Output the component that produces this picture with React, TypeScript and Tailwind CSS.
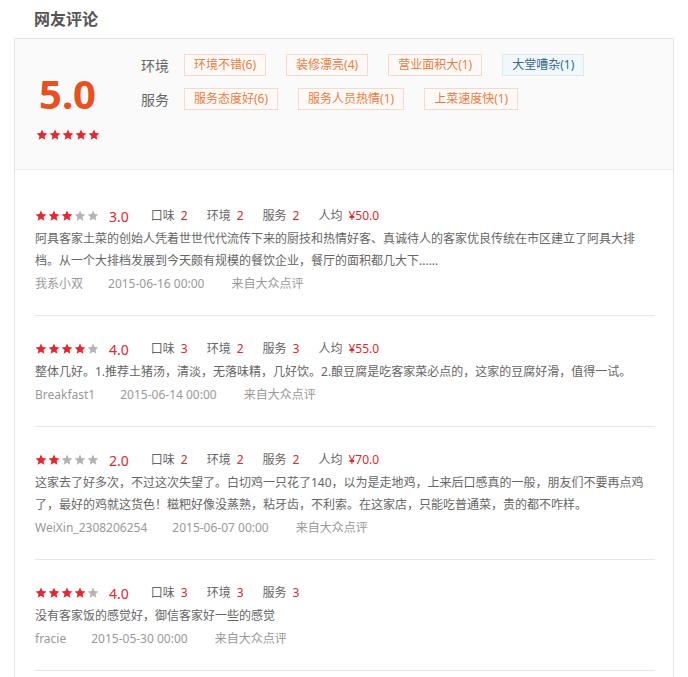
import React from 'react'

type Review = {
  stars: number
  score: string
  taste: number
  env: number
  service: number
  price?: string
  text: string
  user: string
  date: string
}

const reviews: Review[] = [
  {
    stars: 3,
    score: '3.0',
    taste: 2,
    env: 2,
    service: 2,
    price: '¥50.0',
    text: '阿具客家土菜的创始人凭着世世代代流传下来的厨技和热情好客、真诚待人的客家优良传统在市区建立了阿具大排档。从一个大排档发展到今天颇有规模的餐饮企业，餐厅的面积都几大下......',
    user: '我系小双',
    date: '2015-06-16 00:00',
  },
  {
    stars: 4,
    score: '4.0',
    taste: 3,
    env: 2,
    service: 3,
    price: '¥55.0',
    text: '整体几好。1.推荐土猪汤，清淡，无落味精，几好饮。2.酿豆腐是吃客家菜必点的，这家的豆腐好滑，值得一试。',
    user: 'Breakfast1',
    date: '2015-06-14 00:00',
  },
  {
    stars: 2,
    score: '2.0',
    taste: 2,
    env: 2,
    service: 2,
    price: '¥70.0',
    text: '这家去了好多次，不过这次失望了。白切鸡一只花了140，以为是走地鸡，上来后口感真的一般，朋友们不要再点鸡了，最好的鸡就这货色！糍粑好像没蒸熟，粘牙齿，不利索。在这家店，只能吃普通菜，贵的都不咋样。',
    user: 'WeiXin_2308206254',
    date: '2015-06-07 00:00',
  },
  {
    stars: 4,
    score: '4.0',
    taste: 3,
    env: 3,
    service: 3,
    text: '没有客家饭的感觉好，御信客家好一些的感觉',
    user: 'fracie',
    date: '2015-05-30 00:00',
  },
]

// 标签
const envTags = [
  { label: '环境不错(6)', good: true },
  { label: '装修漂亮(4)', good: true },
  { label: '营业面积大(1)', good: true },
  { label: '大堂嘈杂(1)', good: false },
]
const serviceTags = [
  { label: '服务态度好(6)', good: true },
  { label: '服务人员热情(1)', good: true },
  { label: '上菜速度快(1)', good: true },
]

function Star({ on }: { on: boolean }) {
  return (
    <svg width="12" height="12" viewBox="0 0 24 24" className="block">
      <polygon
        points="12,1.2 15.2,8.1 22.8,8.9 17.1,14 18.7,21.6 12,17.7 5.3,21.6 6.9,14 1.2,8.9 8.8,8.1"
        fill={on ? '#e8262d' : '#b5b5b5'}
      />
    </svg>
  )
}

function Stars({ count }: { count: number }) {
  return (
    <div className="flex gap-[1px]">
      {[0, 1, 2, 3, 4].map(i => (
        <Star key={i} on={i < count} />
      ))}
    </div>
  )
}

function Tag({ label, good }: { label: string; good: boolean }) {
  return (
    <span
      className={`h-[22px] px-[9px] flex items-center border text-[12px] ${
        good
          ? 'border-[#f7d9c9] bg-[#fffaf7] text-[#ef7a3e]'
          : 'border-[#d8eaf2] bg-[#f1f8fb] text-[#35688a]'
      }`}
    >
      {label}
    </span>
  )
}

function Item({ label, value }: { label: string; value: string | number }) {
  return (
    <span className="mr-[19px] flex items-center">
      <span className="text-[#666]">{label}</span>
      <span className="ml-[6px] text-[#e4262d]">{value}</span>
    </span>
  )
}

export default function App() {
  return (
    <div
      className="h-[677px] overflow-hidden bg-white px-[14px]"
      style={{ fontFamily: '"Noto Sans", "Noto Sans CJK SC", sans-serif' }}
    >
      <h2 className="h-[38px] flex items-center pl-[20px] text-[16px] font-bold text-[#555]">网友评论</h2>

      <div className="border border-[#e6e6e6]">
        <div className="h-[131px] bg-[#fafafa] border-b border-[#ebebeb] flex">
          <div className="w-[105px] flex flex-col items-center pt-[35px]">
            <div className="text-[40px] leading-[40px] font-bold text-[#ea4f1f]">5.0</div>
            <div className="mt-[15px]">
              <Stars count={5} />
            </div>
          </div>
          <div className="ml-[21px] pt-[15px] flex flex-col gap-[12px]">
            <div className="flex items-center">
              <span className="w-[28px] mr-[15px] text-[14px] text-[#666]">环境</span>
              <div className="flex gap-[20px]">
                {envTags.map(t => (
                  <Tag key={t.label} {...t} />
                ))}
              </div>
            </div>
            <div className="flex items-center">
              <span className="w-[28px] mr-[15px] text-[14px] text-[#666]">服务</span>
              <div className="flex gap-[20px]">
                {serviceTags.map(t => (
                  <Tag key={t.label} {...t} />
                ))}
              </div>
            </div>
          </div>
        </div>

        <div className="pt-[13px] pl-[20px] pr-[18px]">
          {reviews.map((r, index) => (
            <div key={index} className="pt-[23px] pb-[20px] border-b border-[#e8e8e8]">
              <div className="h-[20px] flex items-center text-[12px]">
                <Stars count={r.stars} />
                <span className="ml-[10px] mr-[22px] text-[14px] text-[#e4262d]">{r.score}</span>
                <Item label="口味" value={r.taste} />
                <Item label="环境" value={r.env} />
                <Item label="服务" value={r.service} />
                {r.price && <Item label="人均" value={r.price} />}
              </div>
              <p className="mt-[2px] w-[611px] text-[12px] leading-[22px] text-[#666]">{r.text}</p>
              <div className="mt-[1px] flex text-[12px] leading-[22px] text-[#999]">
                <span className="mr-[25px]">{r.user}</span>
                <span className="mr-[27px]">{r.date}</span>
                <span>来自大众点评</span>
              </div>
            </div>
          ))}
          <div className="h-[60px]"></div>
        </div>
      </div>
    </div>
  )
}
